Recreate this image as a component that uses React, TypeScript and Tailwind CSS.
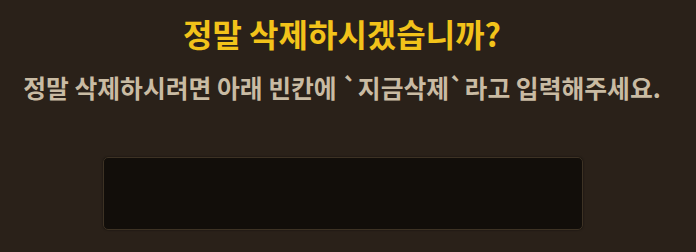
import React from "react";

export default function App() {
  return (
    <div
      className="w-[696px] h-[252px] overflow-hidden bg-[#2a2119] flex flex-col items-center"
      style={{ fontFamily: '"Noto Sans CJK KR", "Noto Sans", sans-serif' }}
    >
      <div className="mt-[9px] mr-[12px] h-[48px] leading-[48px] text-[32px] font-bold text-[#f2c31a] whitespace-nowrap">
        정말 삭제하시겠습니까?
      </div>
      <div className="mt-[12px] mr-[12px] h-[36px] leading-[36px] text-[24.8px] font-bold text-[#c9bba3] whitespace-nowrap">
        정말 삭제하시려면 아래 빈칸에 `지금삭제`라고 입력해주세요.
      </div>
      <div className="mt-[52px] mr-[10px] w-[480px] h-[73px] rounded-[5px] border border-[#3d3224] bg-[#120e0a] shadow-[0_0_2px_rgba(0,0,0,0.6)]" />
    </div>
  );
}
